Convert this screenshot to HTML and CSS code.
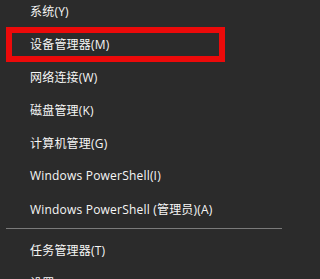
FILE: index.html
```html
<!DOCTYPE html>
<html lang="zh-CN">
<head>
<meta charset="utf-8">
<link rel="stylesheet" href="styles.css">
</head>
<body>
<div class="menu">
  <div class="item">系统(Y)</div>
  <div class="item marked">设备管理器(M)<span class="highlight"></span></div>
  <div class="item">网络连接(W)</div>
  <div class="item">磁盘管理(K)</div>
  <div class="item">计算机管理(G)</div>
  <div class="item">Windows PowerShell(I)</div>
  <div class="item">Windows PowerShell (管理员)(A)</div>
  <div class="separator"></div>
  <div class="item">任务管理器(T)</div>
  <div class="item">设置(N)</div>
</div>
</body>
</html>
```
FILE: styles.css
```css
html, body {
  margin: 0;
  padding: 0;
  background: #2b2b2b;
  overflow: hidden;
}
body {
  width: 291px;
  height: 279px;
  font-family: "Open Sans", "Noto Sans CJK SC", sans-serif;
  font-size: 12px;
  letter-spacing: 0.2px;
  color: #f6f6f6;
}
.menu {
  display: flex;
  flex-direction: column;
  margin-top: -6px;
}
.item {
  position: relative;
  height: 33px;
  display: flex;
  align-items: center;
  padding-left: 30px;
  white-space: nowrap;
}
.highlight {
  position: absolute;
  top: 0;
  left: 6px;
  width: 219px;
  height: 35px;
  box-sizing: border-box;
  border: 6px solid #ec0a0a;
}
.separator {
  height: 1px;
  margin: 3px 9px 4px 6px;
  background: #7a7a7a;
}
```
